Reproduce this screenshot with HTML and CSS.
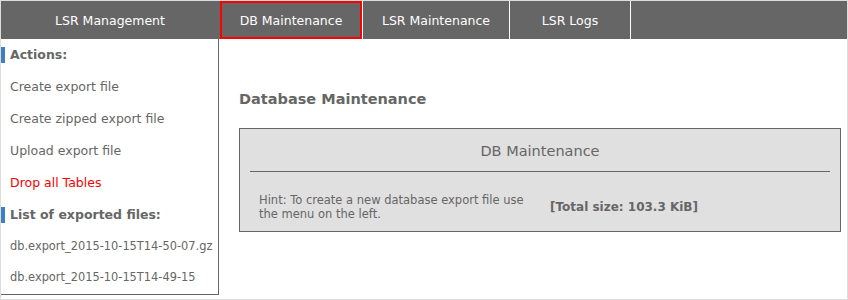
FILE: index.html
```html
<!DOCTYPE html>
<html lang="en">
<head>
    <meta charset="UTF-8">
    <title>LSR - DB Maintenance</title>
    <link rel="stylesheet" href="styles.css">
</head>
<body>
    <div class="page">
        <!-- Top navigation -->
        <div class="topbar">
            <div class="brand">LSR Management</div>
            <a class="tab active" href="#">DB Maintenance</a>
            <a class="tab" href="#">LSR Maintenance</a>
            <a class="tab logs" href="#">LSR Logs</a>
            <div class="tab-fill"></div>
        </div>

        <div class="layout">
            <!-- Left menu -->
            <div class="sidebar">
                <div class="menu-head"><span>Actions:</span></div>
                <a class="menu-item" href="#">Create export file</a>
                <a class="menu-item" href="#">Create zipped export file</a>
                <a class="menu-item" href="#">Upload export file</a>
                <a class="menu-item danger" href="#">Drop all Tables</a>
                <div class="menu-head"><span>List of exported files:</span></div>
                <a class="menu-item file" href="#">db.export_2015-10-15T14-50-07.gz</a>
                <a class="menu-item file" href="#">db.export_2015-10-15T14-49-15</a>
            </div>

            <!-- Main content -->
            <div class="content">
                <h2 class="page-title">Database Maintenance</h2>
                <div class="panel">
                    <div class="panel-title">DB Maintenance</div>
                    <div class="panel-body">
                        <div class="hint">Hint: To create a new database export file use the menu on the left.</div>
                        <div class="total">[Total size: 103.3 KiB]</div>
                    </div>
                </div>
            </div>
        </div>
    </div>
</body>
</html>
```

FILE: styles.css
```css
html, body {
    margin: 0;
    padding: 0;
}
body {
    font-family: "DejaVu Sans", Verdana, sans-serif;
    font-size: 12.5px;
    color: #666;
    background: #fff;
}
a {
    text-decoration: none;
}
.page {
    width: 846px;
    height: 298px;
    border: 1px solid #ddd;
    overflow: hidden;
}
.topbar {
    display: flex;
    height: 38px;
    background: #666;
}
.brand {
    width: 218px;
    line-height: 39px;
    text-align: center;
    color: #fff;
}
.tab {
    width: 147px;
    line-height: 39px;
    text-align: center;
    color: #fff;
    border-left: 1px solid #fff;
    box-sizing: border-box;
}
.tab.active {
    width: 142px;
    margin-left: 1px;
    border: 2px solid #f00;
    line-height: 35px;
}
.tab.logs {
    width: 121px;
}
.tab-fill {
    flex: 1;
    border-left: 1px solid #fff;
}
.layout {
    display: flex;
    align-items: flex-start;
}
.sidebar {
    width: 217px;
    height: 255px;
    border-right: 1px solid #666;
    border-bottom: 1px solid #666;
}
.menu-head {
    display: flex;
    align-items: center;
    height: 32px;
    font-weight: bold;
}
.menu-head span {
    border-left: 4px solid #3d7fc1;
    padding-left: 5px;
    line-height: 16px;
}
.menu-item {
    display: block;
    padding-left: 9px;
    line-height: 32px;
    color: #666;
}
.menu-item.danger {
    color: #f00;
}
.menu-item.file {
    font-size: 11.4px;
    line-height: 31px;
}
.content {
    flex: 1;
    padding: 52px 6px 0 20px;
}
.page-title {
    margin: 0 0 21px;
    font-size: 14.5px;
    font-weight: bold;
}
.panel {
    background: #e0e0e0;
    border: 1px solid #666;
    height: 102px;
    padding: 0 10px;
}
.panel-title {
    text-align: center;
    font-size: 14.5px;
    padding: 14px 0 12px;
    border-bottom: 1px solid #666;
}
.panel-body {
    display: flex;
    align-items: center;
    padding: 21px 0 0 9px;
}
.hint {
    width: 284px;
    font-size: 11.5px;
    line-height: 14px;
}
.total {
    margin-left: 7px;
    font-size: 12px;
    font-weight: bold;
}
```
